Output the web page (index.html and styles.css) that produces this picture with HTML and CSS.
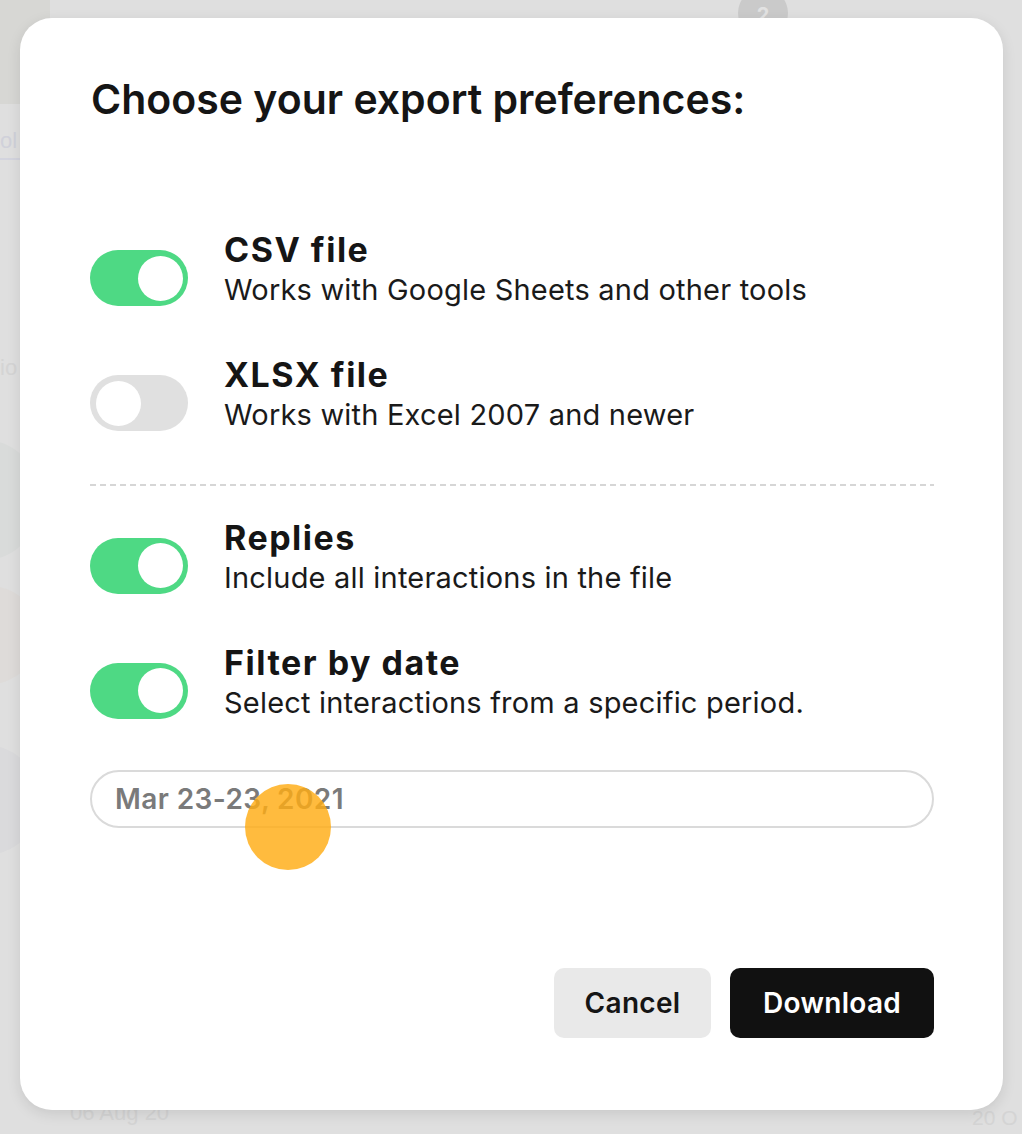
FILE: index.html
```html
<!DOCTYPE html>
<html lang="en">
<head>
<meta charset="utf-8">
<title>Export preferences</title>
<link rel="stylesheet" href="styles.css">
</head>
<body>
<div class="backdrop">
  <div class="bg-thumb"></div>
  <div class="bg-line"></div>
  <div class="bg-badge">2</div>
  <div class="bg-text bg-t1">ol</div>
  <div class="bg-text bg-t2">io</div>
  <div class="bg-blob bg-b1"></div>
  <div class="bg-blob bg-b2"></div>
  <div class="bg-blob bg-b3"></div>
  <div class="bg-text bg-t3">06 Aug 20</div>
  <div class="bg-text bg-t4">20 O</div>

  <div class="modal">
    <h1 class="title">Choose your export preferences:</h1>

    <div class="options first">
      <div class="option">
        <span class="toggle on"><span class="knob"></span></span>
        <div class="opt-text">
          <div class="opt-title">CSV file</div>
          <div class="opt-desc">Works with Google Sheets and other tools</div>
        </div>
      </div>
      <div class="option">
        <span class="toggle"><span class="knob"></span></span>
        <div class="opt-text">
          <div class="opt-title">XLSX file</div>
          <div class="opt-desc">Works with Excel 2007 and newer</div>
        </div>
      </div>
    </div>

    <div class="sep"></div>

    <div class="options">
      <div class="option">
        <span class="toggle on"><span class="knob"></span></span>
        <div class="opt-text">
          <div class="opt-title">Replies</div>
          <div class="opt-desc">Include all interactions in the file</div>
        </div>
      </div>
      <div class="option">
        <span class="toggle on"><span class="knob"></span></span>
        <div class="opt-text">
          <div class="opt-title">Filter by date</div>
          <div class="opt-desc">Select interactions from a specific period.</div>
        </div>
      </div>
    </div>

    <div class="date-wrap">
      <div class="date-input">Mar 23-23, 2021</div>
      <span class="cursor-dot"></span>
    </div>

    <div class="actions">
      <button class="btn btn-cancel">Cancel</button>
      <button class="btn btn-download">Download</button>
    </div>
  </div>
</div>
</body>
</html>
```

FILE: styles.css
```css
* { box-sizing: border-box; }
html, body { margin: 0; padding: 0; }
body {
  width: 1022px;
  height: 1134px;
  overflow: hidden;
  background: #dfdfdf;
  font-family: Inter, "Noto Sans", "Liberation Sans", sans-serif;
  color: #151515;
}
.backdrop {
  position: relative;
  width: 1022px;
  height: 1134px;
  padding: 18px 19px 0 20px;
}
/* faint page content behind the dialog */
.bg-thumb {
  position: absolute; left: 0; top: 0; width: 50px; height: 104px;
  background: #d7d7d4;
}
.bg-line {
  position: absolute; left: 0; top: 158px; width: 30px; height: 2px;
  background: #d3d4de;
}
.bg-badge {
  position: absolute; left: 738px; top: -12px; width: 50px; height: 50px;
  border-radius: 50%; background: #cacaca; color: #e2e2e2;
  font: 700 20px Inter, sans-serif; text-align: center; line-height: 38px; padding-top: 8px;
}
.bg-text { position: absolute; color: #d4d4d4; font-family: "Liberation Sans", sans-serif; font-size: 22px; }
.bg-t1 { left: 0; top: 128px; color: #d0d1da; }
.bg-t2 { left: 0; top: 355px; }
.bg-t3 { left: 70px; top: 1100px; font-size: 22px; }
.bg-t4 { left: 972px; top: 1106px; font-size: 21px; }
.bg-blob { position: absolute; border-radius: 50%; }
.bg-b1 { left: -70px; top: 440px; width: 110px; height: 120px; background: #d9dbda; }
.bg-b2 { left: -70px; top: 585px; width: 110px; height: 100px; background: #dedbd9; }
.bg-b3 { left: -70px; top: 745px; width: 110px; height: 110px; background: #dadadc; }

.modal {
  position: relative;
  width: 983px;
  height: 1092px;
  background: #fff;
  border-radius: 32px;
  box-shadow: 0 4px 14px rgba(0,0,0,0.10);
  padding: 0 69px 0 70px;
  display: flex;
  flex-direction: column;
}
.title {
  margin: 56px 0 0 1px;
  font-size: 41px;
  font-weight: 600;
  line-height: 50px;
  color: #151515;
}
.options {
  display: flex;
  flex-direction: column;
  gap: 48px;
}
.options.first { margin-top: 106px; }
.option {
  display: flex;
  align-items: flex-start;
  gap: 36px;
}
.toggle {
  flex: none;
  width: 98px;
  height: 56px;
  border-radius: 28px;
  background: #e0e0e0;
  margin-top: 20px;
  display: flex;
  align-items: center;
  padding: 0 5px 0 6px;
}
.toggle.on { background: #4ed984; justify-content: flex-end; }
.knob {
  width: 45px; height: 45px; border-radius: 50%; background: #fff;
}
.opt-title {
  font-size: 34px;
  font-weight: 700;
  line-height: 40px;
  letter-spacing: 1.5px;
  color: #151515;
}
.opt-desc {
  font-size: 29px;
  line-height: 34px;
  color: #1a1a1a;
  margin-top: 3px;
  letter-spacing: 0.2px;
}
.sep {
  height: 1.5px;
  margin: 52px 0 32px;
  background-image: repeating-linear-gradient(to right, #d6d6d6 0 6px, transparent 6px 10px);
}
.date-wrap {
  position: relative;
  margin-top: 50px;
}
.date-input {
  height: 58px;
  border: 2px solid #dadada;
  border-radius: 29px;
  padding: 0 23px;
  font-size: 28px;
  font-weight: 600;
  letter-spacing: 0.4px;
  color: #7a7a7a;
  line-height: 54px;
}
.cursor-dot {
  position: absolute;
  left: 155px;
  top: 14px;
  width: 86px;
  height: 86px;
  border-radius: 50%;
  background: rgba(255, 172, 20, 0.82);
}
.actions {
  margin-top: auto;
  margin-bottom: 72px;
  display: flex;
  justify-content: flex-end;
  gap: 19px;
}
.btn {
  height: 70px;
  border: 0;
  border-radius: 10px;
  font-family: inherit;
  font-size: 28px;
  font-weight: 600;
  letter-spacing: 0.3px;
  padding: 0;
  cursor: pointer;
}
.btn-cancel { background: #e9e9e9; color: #151515; width: 157px; }
.btn-download { background: #111; color: #fff; width: 204px; }
```
